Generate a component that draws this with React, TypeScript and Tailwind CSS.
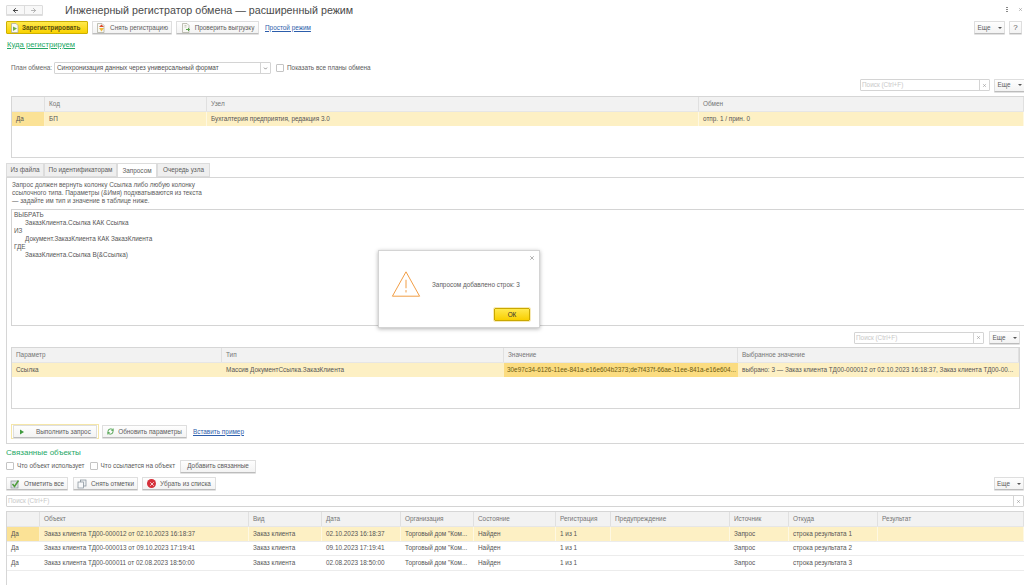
import React from "react";
import { ArrowLeft, ArrowRight, X, RefreshCw, ChevronDown } from "lucide-react";

const Caret = () => <span className="ml-[3px] inline-block h-0 w-0 border-x-[2px] border-t-[2px] border-x-transparent border-t-[#555]" />;

function Btn({ children, className = "" }: { children: React.ReactNode; className?: string }) {
  return (
    <div className={"flex h-[13px] shrink-0 items-center justify-center gap-[4px] rounded-[1px] border border-[#dedede] border-b-[#bcbcbc] bg-[linear-gradient(#fefefe,#f3f3f3)] text-[6.400px] text-[#5c5c5c] shadow-[0_1px_0_#e2e2e2] " + className}>
      {children}
    </div>
  );
}

function Search({ className = "" }: { className?: string }) {
  return (
    <div className={"flex h-[12px] items-center rounded-[1px] border border-[#d4d4d4] bg-white " + className}>
      <span className="flex-1 pl-[1px] text-[6.400px] text-[#c8c8c8]">Поиск (Ctrl+F)</span>
      <span className="flex h-full w-[10px] items-center justify-center border-l border-[#d4d4d4]"><X size={5} color="#777" strokeWidth={2} /></span>
    </div>
  );
}

function Check({ label }: { label: string }) {
  return (
    <div className="flex items-center gap-[3px] whitespace-nowrap text-[6.400px] text-[#5c5c5c]">
      <span className="h-[8px] w-[8px] rounded-[1px] border border-[#c4c4c4] bg-white" />
      <span>{label}</span>
    </div>
  );
}

function Row({ cols, cells, cls, first }: { cols: string; cells: string[]; cls: string; first?: string }) {
  return (
    <div className={"grid items-stretch text-[6.400px] text-[#555] " + cols + " " + cls}>
      {cells.map((c, i) => (
        <div key={i} className={"flex items-center overflow-hidden whitespace-nowrap border-r border-white/50 pl-[4px] " + (i === 0 && first ? first : "")}>{c}</div>
      ))}
    </div>
  );
}

function Head({ cols, cells, className = "h-[15px]" }: { cols: string; cells: string[]; className?: string }) {
  return (
    <div className={"grid border-b border-[#e6e6e6] bg-[#f2f2f2] text-[6.400px] text-[#757575] " + cols + " " + className}>
      {cells.map((c, i) => (
        <div key={i} className="flex items-center whitespace-nowrap border-r border-[#e0e0e0] pl-[4px]">{c}</div>
      ))}
    </div>
  );
}

const Tab = ({ t, w, active }: { t: string; w: string; active?: boolean }) => (
  <div className={"flex h-[14px] items-center justify-center border border-[#dcdcdc] text-[6.400px] text-[#5c5c5c] " + w + " " + (active ? "border-b-0 bg-white" : "bg-[#efefef]")}>{t}</div>
);

const t1 = "grid-cols-[33px_162px_492px_1fr]";
const t2 = "grid-cols-[210px_282px_234px_1fr]";
const t3 = "grid-cols-[33px_209px_73px_79px_73px_82px_55px_119px_59px_89px_1fr]";

const objRows = [
  ["Да", "Заказ клиента ТД00-000012 от 02.10.2023 16:18:37", "Заказ клиента", "02.10.2023 16:18:37", "Торговый дом \"Ком...", "Найден", "1 из 1", "", "Запрос", "строка результата 1", ""],
  ["Да", "Заказ клиента ТД00-000013 от 09.10.2023 17:19:41", "Заказ клиента", "09.10.2023 17:19:41", "Торговый дом \"Ком...", "Найден", "1 из 1", "", "Запрос", "строка результата 2", ""],
  ["Да", "Заказ клиента ТД00-000011 от 02.08.2023 18:50:00", "Заказ клиента", "02.08.2023 18:50:00", "Торговый дом \"Ком...", "Найден", "1 из 1", "", "Запрос", "строка результата 3", ""],
];

const Page = () => <path d="M1.500.5h4.500l2 2v7h-6.500z" fill="#f8f8f4" stroke="#a8a898" strokeWidth=".7" />;

const IconRegister = () => (
  <svg width="10" height="10" viewBox="0 0 10 10"><Page /><path d="M3 3.500 7 5.500 3 8z" fill="#6fb04a" /></svg>
);
const IconUnregister = () => (
  <svg width="10" height="10" viewBox="0 0 10 10"><Page /><path d="M5.500 1.500 8 4H3z" fill="#d9482b" /><path d="M3 5h5L5.500 8.500z" fill="#f0b93a" /></svg>
);
const IconVerify = () => (
  <svg width="10" height="10" viewBox="0 0 10 10"><Page /><path d="M3.500 2.500h2M3.500 4h2" stroke="#a8a898" strokeWidth=".6" /><path d="M5 6.500h3.500M7 5l1.500 1.500L7 8" fill="none" stroke="#58a44a" strokeWidth="1" /></svg>
);
const IconMarkAll = () => (
  <svg width="10" height="10" viewBox="0 0 10 10"><rect x="1" y="2" width="7" height="7" fill="#dfe3e6" stroke="#8b949b" strokeWidth=".7" /><path d="M2.500 5 4.500 7.500 8.500 1.500" fill="none" stroke="#4f9c3c" strokeWidth="1.500" /></svg>
);
const IconUnmark = () => (
  <svg width="10" height="10" viewBox="0 0 10 10"><rect x="3.500" y="1" width="5.500" height="6" fill="#eef1f3" stroke="#7f8b95" strokeWidth=".7" /><rect x="1" y="3" width="5.500" height="6" fill="#f8f9fa" stroke="#7f8b95" strokeWidth=".7" /></svg>
);

export default function App() {
  return (
    <div className="relative flex h-[585px] w-[1024px] flex-col overflow-hidden bg-white font-['Liberation_Sans',sans-serif] text-[#555]">
      {/* title */}
      <div className="flex h-[21px] shrink-0 items-start pl-[6px] pt-[5px]">
        <div className="flex h-[10px] w-[37px] rounded-[1px] border border-[#dcdcdc] bg-[#f8f8f8] shadow-[0_1px_0_#ddd]">
          <span className="flex flex-1 items-center justify-center border-r border-[#dcdcdc]"><ArrowLeft size={7} color="#333" strokeWidth={3} /></span>
          <span className="flex flex-1 items-center justify-center"><ArrowRight size={7} color="#aaa" strokeWidth={3} /></span>
        </div>
        <div className="ml-[22px] text-[10.700px] leading-[10px] text-[#4a4a4a]">Инженерный регистратор обмена — расширенный режим</div>
        <div className="ml-auto mr-[1px] flex items-center gap-[10px] pt-[2px]">
          <span className="flex flex-col gap-[1px]">
            <span className="h-[1px] w-[2px] bg-[#888]" /><span className="h-[1px] w-[2px] bg-[#888]" /><span className="h-[1px] w-[2px] bg-[#888]" />
          </span>
          <X size={5} color="#777" />
        </div>
      </div>

      {/* command bar */}
      <div className="flex h-[13px] shrink-0 items-center pl-[6px]">
        <div className="flex h-[13px] w-[82px] items-center rounded-[1px] border border-[#cdb000] bg-[linear-gradient(#ffe94d,#f9d200)] pl-[3px] text-[6.400px] font-bold text-[#5a4f10]">
          <IconRegister /><span className="ml-[2px]">Зарегистрировать</span>
        </div>
        <Btn className="ml-[4px] w-[80px]"><IconUnregister /><span>Снять регистрацию</span></Btn>
        <Btn className="ml-[4px] w-[83px]"><IconVerify /><span>Проверить выгрузку</span></Btn>
        <span className="ml-[6px] text-[6.400px] text-[#2c5dab] underline">Простой режим</span>
        <Btn className="ml-auto w-[31px]">Еще<Caret /></Btn>
        <Btn className="ml-[4px] mr-[2px] w-[13px] text-[8px]">?</Btn>
      </div>

      {/* where */}
      <div className="ml-[7px] mt-[5px] h-[11px] shrink-0 text-[7.700px] leading-[11px] text-[#25a866] underline">Куда регистрируем</div>

      <div className="mt-[12px] flex h-[12px] shrink-0 items-center pl-[11px]">
        <span className="w-[43px] whitespace-nowrap text-[6.400px] text-[#666]">План обмена:</span>
        <div className="flex h-[12px] w-[217px] items-center rounded-[1px] border border-[#d4d4d4]">
          <span className="flex-1 pl-[2px] text-[6.400px] text-[#4f4f4f]">Синхронизация данных через универсальный формат</span>
          <span className="flex h-full w-[10px] items-center justify-center border-l border-[#d4d4d4]"><ChevronDown size={5} color="#555" strokeWidth={3} /></span>
        </div>
        <div className="ml-[5px]"><Check label="Показать все планы обмена" /></div>
      </div>

      <div className="mt-[5px] flex h-[12px] shrink-0 items-center justify-end">
        <Search className="w-[130px]" />
        <Btn className="ml-[4px] mr-[-1px] w-[31px]">Еще<Caret /></Btn>
      </div>

      {/* table 1 */}
      <div className="ml-[11px] mt-[5px] h-[62px] shrink-0 border border-r-0 border-[#d6d6d6]">
        <Head cols={t1} cells={["", "Код", "Узел", "Обмен"]} />
        <Row cols={t1} cls="h-[14px] bg-[#fdf0c4]" first="bg-[#fbe296]" cells={["Да", "БП", "Бухгалтерия предприятия, редакция 3.0", "отпр. 1 / прин. 0"]} />
      </div>

      {/* tabs */}
      <div className="mt-[5px] flex h-[14px] shrink-0 pl-[6px]">
        <Tab t="Из файла" w="w-[38px]" />
        <Tab t="По идентификаторам" w="w-[73px]" />
        <Tab t="Запросом" w="w-[40px]" active />
        <Tab t="Очередь узла" w="w-[53px]" />
      </div>

      <div className="ml-[6px] flex h-[267px] shrink-0 flex-col border-b border-l border-t border-[#d6d6d6]">
        <div className="ml-[5px] mt-[3px] h-[24px] text-[6.400px] leading-[8px] text-[#5c5c5c]">
          <div>Запрос должен вернуть колонку Ссылка либо любую колонку</div>
          <div>ссылочного типа. Параметры (&amp;Имя) подхватываются из текста</div>
          <div>— задайте им тип и значение в таблице ниже.</div>
        </div>
        <div className="ml-[4px] mt-[4px] h-[117px] shrink-0 border border-r-0 border-[#d4d4d4] px-[2px] pt-[1px] text-[6.400px] leading-[8px] text-[#555]">
          <div>ВЫБРАТЬ</div>
          <div className="pl-[11px]">ЗаказКлиента.Ссылка КАК Ссылка</div>
          <div>ИЗ</div>
          <div className="pl-[11px]">Документ.ЗаказКлиента КАК ЗаказКлиента</div>
          <div>ГДЕ</div>
          <div className="pl-[11px]">ЗаказКлиента.Ссылка В(&amp;Ссылка)</div>
        </div>
        <div className="mr-[4px] mt-[5px] flex h-[13px] shrink-0 items-center justify-end">
          <Search className="w-[130px]" />
          <Btn className="ml-[5px] w-[31px]">Еще<Caret /></Btn>
        </div>
        <div className="ml-[4px] mr-[4px] mt-[3px] h-[62px] shrink-0 border border-[#d6d6d6]">
          <Head cols={t2} cells={["Параметр", "Тип", "Значение", "Выбранное значение"]} />
          <div className={"grid h-[14px] items-stretch bg-[#fdf0c4] text-[6.400px] text-[#555] " + t2}>
            <div className="flex items-center pl-[4px]">Ссылка</div>
            <div className="flex items-center pl-[4px]">Массив ДокументСсылка.ЗаказКлиента</div>
            <div className="flex items-center overflow-hidden whitespace-nowrap bg-[#fbdc80] pl-[3px] text-[#6b5a10]">30e97c34-6126-11ee-841a-e16e604b2373;de7f437f-66ae-11ee-841a-e16e604...</div>
            <div className="flex items-center overflow-hidden whitespace-nowrap pl-[4px]">выбрано: 3 — Заказ клиента ТД00-000012 от 02.10.2023 16:18:37, Заказ клиента ТД00-00...</div>
          </div>
        </div>
        <div className="ml-[4px] mt-[16px] flex h-[13px] shrink-0 items-center">
          <div className="flex h-[15px] w-[88px] items-center border border-[#f5e6a8] p-[1px]">
            <Btn className="w-full justify-start pl-[5px]"><svg width="6" height="6" viewBox="0 0 6 6"><path d="M1 .5 5 3 1 5.500z" fill="#3f9a3f" /></svg><span className="ml-[7px]">Выполнить запрос</span></Btn>
          </div>
          <Btn className="ml-[3px] w-[85px]"><RefreshCw size={7} color="#3f9a3f" strokeWidth={3} /><span>Обновить параметры</span></Btn>
          <span className="ml-[6px] text-[6.400px] text-[#2c5dab] underline">Вставить пример</span>
        </div>
      </div>

      {/* related */}
      <div className="ml-[6px] mt-[3px] h-[11px] shrink-0 text-[8px] leading-[11px] text-[#25a866]">Связанные объекты</div>
      <div className="mt-[1px] flex h-[14px] shrink-0 items-center pl-[6px]">
        <Check label="Что объект использует" />
        <div className="ml-[5px]"><Check label="Что ссылается на объект" /></div>
        <Btn className="ml-[5px] w-[76px]">Добавить связанные</Btn>
      </div>
      <div className="mt-[4px] flex h-[13px] shrink-0 items-center pl-[6px]">
        <Btn className="w-[62px]"><IconMarkAll /><span>Отметить все</span></Btn>
        <Btn className="ml-[5px] w-[65px]"><IconUnmark /><span>Снять отметки</span></Btn>
        <Btn className="ml-[4px] w-[74px]">
          <span className="flex h-[9px] w-[9px] items-center justify-center rounded-full bg-[#d5303a]"><X size={6} color="#fff" strokeWidth={3} /></span>
          <span>Убрать из списка</span>
        </Btn>
        <Btn className="ml-auto w-[30px]">Еще<Caret /></Btn>
      </div>
      <Search className="ml-[6px] mt-[5px] shrink-0" />
      <div className="ml-[6px] mt-[4px] flex-1 border border-r-0 border-b-0 border-[#d6d6d6]">
        <Head cols={t3} cells={["", "Объект", "Вид", "Дата", "Организация", "Состояние", "Регистрация", "Предупреждение", "Источник", "Откуда", "Результат"]} />
        {objRows.map((r, i) => (
          <Row key={i} cols={t3} cells={r} cls={"h-[14.500px] border-b border-[#ececec] " + (i === 0 ? "bg-[#fdf0c4]" : "bg-white")} first={i === 0 ? "bg-[#fbe296]" : ""} />
        ))}
      </div>

      {/* dialog */}
      <div className="absolute left-[378px] top-[250px] h-[78px] w-[162px] border border-[#d4d4d4] bg-white shadow-[0_1px_4px_rgba(0,0,0,0.3)]">
        <X className="absolute right-[4px] top-[4px]" size={6} color="#666" strokeWidth={2} />
        <svg className="absolute left-[12px] top-[19px]" width="30" height="28" viewBox="0 0 32 29">
          <path d="M16 1.500 30.500 27.500H1.500z" fill="none" stroke="#f0983a" strokeWidth="1" />
          <path d="M16 10v9M16 21v2.500" stroke="#f0983a" strokeWidth="1" />
        </svg>
        <div className="absolute left-[53px] top-[29px] whitespace-nowrap text-[6.400px] text-[#5c5c5c]">Запросом добавлено строк: 3</div>
        <div className="absolute right-[9px] top-[57px] flex h-[13px] w-[36px] items-center justify-center rounded-[1px] border border-[#c9a800] bg-[linear-gradient(#ffe94d,#f9cf00)] text-[6.400px] text-[#333] outline outline-1 outline-[#f8eab5]">ОК</div>
      </div>
    </div>
  );
}
